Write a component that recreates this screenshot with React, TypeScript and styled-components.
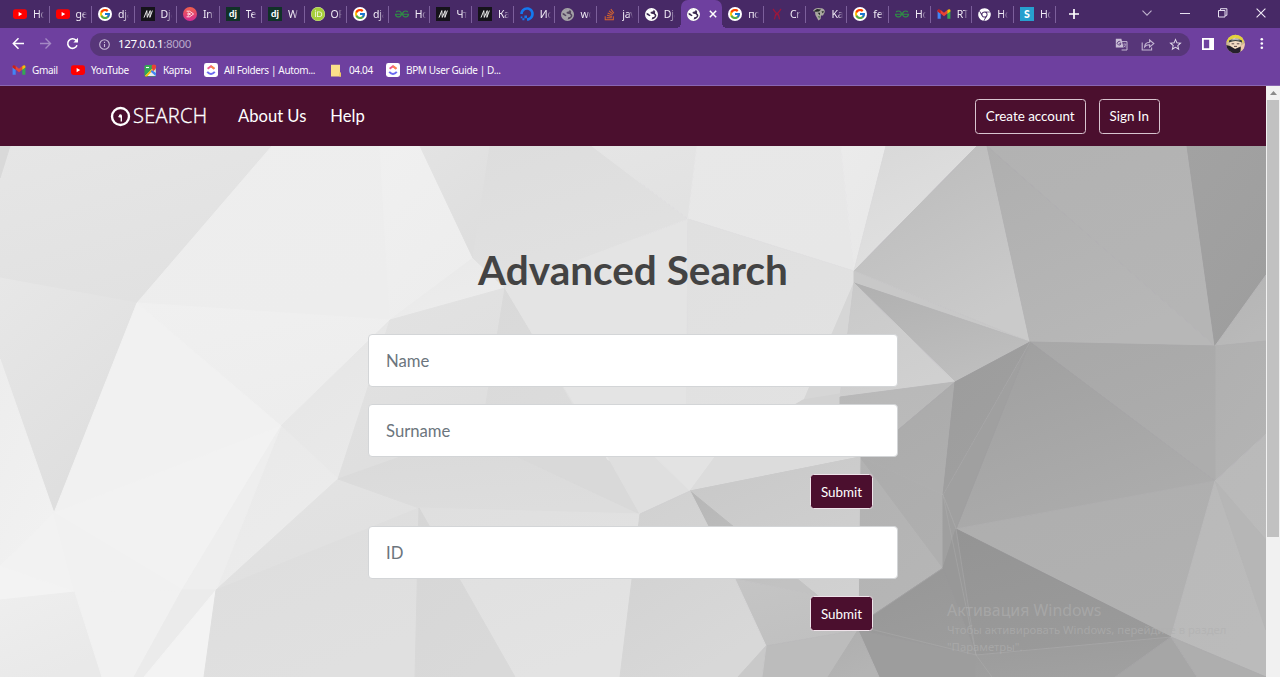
import React from 'react';
import styled, { createGlobalStyle, css } from 'styled-components';
import { FcGoogle } from 'react-icons/fc';
import { FaChrome, FaDigitalOcean, FaOrcid, FaStackOverflow } from 'react-icons/fa';
import { SiGeeksforgeeks } from 'react-icons/si';
import { MdGTranslate, MdStarBorder } from 'react-icons/md';

const uiFont = `'Noto Sans', 'Open Sans', sans-serif`;
const wine = '#4b0f2e';

const GlobalStyle = createGlobalStyle`
  * { box-sizing: border-box; }
  html, body { margin: 0; padding: 0; overflow: hidden; }
  body { font-family: Lato, sans-serif; }
  svg { display: block; flex: none; }
`;

const Window = styled.div`
  width: 1280px;
  height: 677px;
  display: flex;
  flex-direction: column;
  overflow: hidden;
  background: #6e409f;
`;

/* ---------- browser chrome ---------- */

const TabStrip = styled.div`
  height: 28px;
  flex: none;
  display: flex;
  padding-left: 7px;
  background: #472966;
`;

const Tab = styled.div<{ $active?: boolean; $wide?: boolean; $plain?: boolean }>`
  position: relative;
  width: ${p => (p.$wide ? 42.5 : 41.7)}px;
  height: 28px;
  flex: none;
  display: flex;
  align-items: center;
  gap: 6px;
  padding-left: 6px;
  ${p =>
    !p.$plain &&
    css`
      &::after {
        content: '';
        position: absolute;
        right: 0;
        top: 6px;
        width: 1px;
        height: 17px;
        background: #7c5f9b;
      }
    `}
  ${p =>
    p.$active &&
    css`
      background: #6e409f;
      border-radius: 7px 7px 0 0;
      gap: 9px;
      &::before {
        content: '';
        position: absolute;
        left: -5px;
        right: -5px;
        bottom: 0;
        height: 5px;
        background:
          radial-gradient(circle at 0 0, transparent 5px, #6e409f 5px) left / 5px 5px no-repeat,
          radial-gradient(circle at 100% 0, transparent 5px, #6e409f 5px) right / 5px 5px no-repeat;
      }
    `}
`;

const TabTitle = styled.span`
  width: 11px;
  overflow: hidden;
  white-space: nowrap;
  font: 10.5px/16px ${uiFont};
  letter-spacing: -0.2px;
  color: #f1ecf6;
  mask-image: linear-gradient(to right, #000 55%, transparent 100%);
`;

const WindowButtons = styled.div`
  margin-left: auto;
  display: flex;
  align-items: center;
  height: 25px;
  gap: 28px;
  padding-right: 14px;
`;

const NewTab = styled.div`
  padding-left: 13px;
  height: 28px;
  display: flex;
  align-items: center;
`;

const Toolbar = styled.div`
  height: 31px;
  flex: none;
  display: flex;
  align-items: center;
  padding: 0 12px 0 12px;
`;

const NavIcons = styled.div`
  width: 78px;
  display: flex;
  gap: 14px;
  align-items: center;
`;

const AddressBar = styled.div`
  width: 1100px;
  height: 23px;
  margin-top: 1px;
  border-radius: 12px;
  background: #573679;
  display: flex;
  align-items: center;
  padding: 0 7px 0 9px;
`;

const Url = styled.span`
  margin-left: 8px;
  font: 11.6px/16px ${uiFont};
  letter-spacing: -0.42px;
  color: #fff;
  span { color: #b9a8cb; }
`;

const BarActions = styled.div`
  margin-left: auto;
  display: flex;
  align-items: center;
  gap: 13px;
  color: #c3b5d2;
`;

const RightTools = styled.div`
  display: flex;
  align-items: center;
  gap: 12px;
  margin-left: 12px;
`;

const Bookmarks = styled.div`
  height: 27px;
  flex: none;
  display: flex;
  align-items: center;
  padding: 0 0 4px 12px;
  border-bottom: 1px solid #8a66b2;
`;

const Bookmark = styled.div<{ $w: number }>`
  width: ${p => p.$w}px;
  display: flex;
  align-items: center;
  gap: 6px;
  font: 10px/14px ${uiFont};
  letter-spacing: -0.36px;
  color: #fbf8fd;
  white-space: nowrap;
`;

/* ---------- web page ---------- */

const Viewport = styled.div`
  flex: 1;
  min-height: 0;
  display: flex;
`;

const Page = styled.div`
  width: 1266px;
  display: flex;
  flex-direction: column;
`;

const Navbar = styled.nav`
  height: 60px;
  flex: none;
  display: flex;
  align-items: center;
  padding: 0 106px 0 110px;
  background: ${wine};
  color: #fff;
`;

const Brand = styled.div`
  width: 128px;
  display: flex;
  align-items: center;
  gap: 2px;
  font: 20px/24px 'Open Sans', sans-serif;
  font-weight: 300;
  letter-spacing: 0.3px;
  -webkit-text-stroke: 0.35px #fff;
`;

const NavLink = styled.a`
  margin-right: 24px;
  font-size: 16.6px;
  line-height: 24px;
`;

const NavButtons = styled.div`
  margin-left: auto;
  display: flex;
  gap: 13px;
`;

const NavButton = styled.button`
  height: 35px;
  padding: 0 10px;
  border: 1px solid #d8c4cf;
  border-radius: 3.5px;
  background: transparent;
  color: #fff;
  font: 13.4px/20px Lato, sans-serif;
  white-space: nowrap;
`;

const Hero = styled.main`
  position: relative;
  flex: 1;
  min-height: 0;
  display: flex;
  flex-direction: column;
  align-items: center;
  overflow: hidden;
`;

const Backdrop = styled.svg`
  position: absolute;
  inset: 0;
`;

const Title = styled.h1`
  position: relative;
  margin: 100px 0 40px;
  font: 700 40.5px/48px Lato, sans-serif;
  color: #434343;
  white-space: nowrap;
`;

const SearchForm = styled.form`
  position: relative;
  width: 530px;
  display: flex;
  flex-direction: column;
  gap: 17px;
`;

const Field = styled.input`
  width: 530px;
  height: 53px;
  padding: 0 17px;
  border: 1px solid #d3d5d7;
  border-radius: 4px;
  background: #fff;
  font: 16.7px/26px Lato, sans-serif;
  &::placeholder { color: #6c757d; opacity: 1; }
`;

const Submit = styled.button`
  align-self: flex-end;
  width: 63px;
  height: 35px;
  margin-right: 25px;
  padding: 0;
  border: 1px solid #efe3ea;
  border-radius: 3.5px;
  background: ${wine};
  color: #fff;
  font: 13.4px/20px Lato, sans-serif;
`;

const Watermark = styled.aside`
  position: absolute;
  left: 947px;
  top: 454px;
  color: rgba(176, 176, 176, 0.62);
  white-space: nowrap;
  font: 11.3px/17px ${uiFont};
  h2 {
    margin: 0;
    font: 15.9px/21px ${uiFont};
  }
`;

const Scrollbar = styled.div`
  width: 14px;
  background: #f1f1f1;
  display: flex;
  flex-direction: column;
  align-items: center;
`;

const ScrollArrow = styled.div`
  height: 14px;
  display: flex;
  align-items: center;
`;

const ScrollThumb = styled.div`
  width: 12px;
  height: 437px;
  background: #c1c1c1;
`;

/* ---------- icons ---------- */

const YouTube = () => (
  <svg width="14" height="14" viewBox="0 0 14 14">
    <rect x="0" y="2.2" width="14" height="9.8" rx="2.4" fill="#f00" />
    <path d="M5.6 5v4.2L9.2 7.1z" fill="#fff" />
  </svg>
);

const GoogleDisc = styled.span`
  width: 14px;
  height: 14px;
  flex: none;
  border-radius: 50%;
  background: #fff;
  display: grid;
  place-items: center;
`;
const Google = () => (
  <GoogleDisc>
    <FcGoogle size={12} />
  </GoogleDisc>
);

const Medium = () => (
  <svg width="14" height="14" viewBox="0 0 14 14">
    <rect width="14" height="14" fill="#15131a" />
    <path d="M3 10.6L5.8 3.6L6.3 10.4L9.2 3.6L8.9 10.4M8.9 10.4L11.4 3.6" fill="none" stroke="#f3f3f3" strokeWidth=".95" />
  </svg>
);

const Pink = () => (
  <svg width="14" height="14" viewBox="0 0 14 14">
    <defs>
      <linearGradient id="pk" x1="0" y1="0" x2="0" y2="1">
        <stop offset="0" stopColor="#f2604a" />
        <stop offset="1" stopColor="#d42a92" />
      </linearGradient>
    </defs>
    <circle cx="7" cy="7" r="7" fill="url(#pk)" />
    <path d="M3.6 4.2h3l4 2.8-4 2.8h-3M5 5.8l2.6 1.2L5 8.3z" fill="none" stroke="#ffd9e4" strokeWidth="1" />
  </svg>
);

const Django = () => (
  <svg width="14" height="14" viewBox="0 0 14 14">
    <rect width="14" height="14" fill="#113228" />
    <text x="7" y="10" textAnchor="middle" fontFamily="Lato, sans-serif" fontWeight="900" fontSize="9.5" fill="#fff">dj</text>
  </svg>
);

const OrcidDisc = styled.span`
  width: 14px;
  height: 14px;
  flex: none;
  border-radius: 50%;
  background: #f3f8e8;
`;
const Orcid = () => (
  <OrcidDisc>
    <FaOrcid size={14} color="#a6ce39" />
  </OrcidDisc>
);

const WorldDisc = styled.span<{ $dim?: boolean }>`
  width: 13px;
  height: 13px;
  flex: none;
  border-radius: 50%;
  background: ${p => (p.$dim ? '#54465f' : '#3b2a50')};
  color: ${p => (p.$dim ? '#a5a2a8' : '#fff')};
`;
const World = ({ dim }: { dim?: boolean }) => (
  <WorldDisc $dim={dim}>
    <svg width="13" height="13" viewBox="0 0 14 14">
      <circle cx="7" cy="7" r="6.2" fill="none" stroke="currentColor" strokeWidth="1.6" />
      <path d="M1.4 5C2.4 2 6 .6 9.6 1.4L8.8 3.6L6 4.4L6.2 6L9.6 6.8L10.8 8.6L9.4 9.8L7.8 10L7 13C3.4 12.8 1 9.8 1 6.8L5 8.8L6 8L3.6 6z" fill="currentColor" />
      <path d="M10.6 2.8L13.2 5.4L13 8L11 5.8z" fill="currentColor" />
    </svg>
  </WorldDisc>
);

const Scissors = () => (
  <svg width="14" height="14" viewBox="0 0 14 14" fill="none" stroke="#9b173c" strokeWidth="1.3">
    <path d="M3 2L7 7.4M11 2L7 7.4M6.1 5.6L4.4 12.4M7.9 5.6L9.6 12.4M7 5.6v3" />
  </svg>
);

const Sketch = () => (
  <svg width="14" height="14" viewBox="0 0 14 14">
    <path d="M1 4C2 1.5 5 .6 8 1.2C11 .8 13.6 3 12.6 5.6L11 8.4L9 8.6L8.6 12L6.4 13.4L4.8 10.6L3.4 8L3 5z" fill="#a9a79f" />
    <path d="M1.4 4.4L5 2L9 2.6L7 4.4L4 4.8zM5.6 5.8h2.4v2.4zM9.4 4.6l2.4-.6-.8 2.6z" fill="#262b28" />
    <path d="M6 9l2 .6-.8 2z" fill="#456b42" />
  </svg>
);

const Gmail = () => (
  <svg width="14" height="14" viewBox="0 0 14 14">
    <path d="M.6 3.4V11.8H3.7V6z" fill="#4285f4" />
    <path d="M13.4 3.4V11.8H10.3V6z" fill="#34a853" />
    <path d="M.6 3.2L3.7 3L7 5.8L10.3 3V6.6L7 9.2L3.7 6.6L.6 4.6z" fill="#ea4335" />
    <path d="M10.3 3Q13.2 1.4 13.4 3.6L13.4 4.6L10.3 6.8z" fill="#fbbc04" />
    <path d="M3.7 3Q.8 1.4 .6 3.6L.6 4.6L3.7 6.8z" fill="#c5221f" />
  </svg>
);

const SBlock = () => (
  <svg width="14" height="14" viewBox="0 0 14 14">
    <rect width="14" height="14" fill="#279fce" />
    <text x="7" y="10.8" textAnchor="middle" fontFamily="Lato, sans-serif" fontWeight="900" fontSize="10.5" fill="#fff">S</text>
  </svg>
);

const Maps = () => (
  <svg width="13" height="13" viewBox="0 0 13 13">
    <rect x=".5" y="1" width="11.5" height="11.5" rx="1.5" fill="#34a853" />
    <path d="M1 12L11.5 1.5L12 12z" fill="#e8eaed" />
    <path d="M.8 12.2L8 4.8L9.2 6L3 12.5z" fill="#fbbc04" />
    <path d="M6.5 7.5L11.8 12.3L12 9L8 6z" fill="#4285f4" />
    <path d="M9.7 7.6C9 5.6 7.6 5 7.6 2.7a2.3 2.3 0 0 1 4.6 0C12.2 5 10.4 5.6 9.7 7.6z" fill="#ea4335" />
    <path d="M2 3.5h3" stroke="#fff" strokeWidth="1.1" />
  </svg>
);

const ClickUp = () => (
  <svg width="14" height="14" viewBox="0 0 14 14">
    <rect width="14" height="14" rx="2.4" fill="#fff" />
    <path d="M3.6 5.8L7 3.2L10.4 5.8" fill="none" stroke="#f0578c" strokeWidth="1.9" />
    <path d="M7 3.2L10.4 5.8" fill="none" stroke="#f9884a" strokeWidth="1.9" />
    <path d="M3.2 8.9Q7 13 10.8 8.9" fill="none" stroke="#6c6bf0" strokeWidth="2" />
  </svg>
);

const Folder = () => (
  <svg width="13" height="13" viewBox="0 0 13 13">
    <path d="M1 .8H10V8.6L11 9.4V12.4H1z" fill="#fbe08a" />
    <path d="M9.3 8.6H11V12.4H9.3z" fill="#efc965" />
  </svg>
);

const Avatar = () => (
  <svg width="19" height="20" viewBox="0 0 19 20">
    <defs>
      <clipPath id="av"><circle cx="9.5" cy="10" r="9.3" /></clipPath>
    </defs>
    <g clipPath="url(#av)">
      <rect width="19" height="20" fill="#cdb992" />
      <path d="M0 9L3 2L9 0L16 2L18 9L12 4L5 5z" fill="#e3d13c" />
      <path d="M3 8L9 3.6L15 8L14.5 12L9.5 15L4.5 12z" fill="#f4dcc4" />
      <path d="M3 6.6Q9.5 3 16 6.6V8.6Q9.5 5.6 3 8.6z" fill="#3b4140" />
      <path d="M5.5 5.6Q9.5 4 13.5 5.6V6.6Q9.5 5.2 5.5 6.6z" fill="#aeb3b0" />
      <path d="M0 11L4 12L9 15L15 12.4L14 20H0z" fill="#26202c" />
      <path d="M14.6 12L19 9V18L15.4 17z" fill="#efc9ac" />
      <path d="M5.6 9.8h2.6M10.8 9.8h2.6M8 12.4h3" stroke="#4b3a3c" strokeWidth=".9" />
    </g>
  </svg>
);

type TabInfo = { icon: React.ReactNode; title: string };

const gfg = <SiGeeksforgeeks size={14} color="#2f8d46" />;

const tabs: TabInfo[] = [
  { icon: <YouTube />, title: 'Но' },
  { icon: <YouTube />, title: 'ge' },
  { icon: <Google />, title: 'dja' },
  { icon: <Medium />, title: 'Dja' },
  { icon: <Pink />, title: 'Int' },
  { icon: <Django />, title: 'Te' },
  { icon: <Django />, title: 'W' },
  { icon: <Orcid />, title: 'OR' },
  { icon: <Google />, title: 'dja' },
  { icon: gfg, title: 'Ho' },
  { icon: <Medium />, title: 'Что' },
  { icon: <Medium />, title: 'Как' },
  { icon: <FaDigitalOcean size={14} color="#1479f0" />, title: 'Ис' },
  { icon: <World dim />, title: 'wo' },
  { icon: <FaStackOverflow size={13} color="#d9652c" />, title: 'jav' },
  { icon: <World />, title: 'Dja' },
  { icon: <World />, title: '' },
  { icon: <Google />, title: 'по' },
  { icon: <Scissors />, title: 'Cr' },
  { icon: <Sketch />, title: 'Ka' },
  { icon: <Google />, title: 'fet' },
  { icon: gfg, title: 'Ho' },
  { icon: <Gmail />, title: 'RT' },
  { icon: <FaChrome size={13} color="#fff" />, title: 'Но' },
  { icon: <SBlock />, title: 'Но' },
];
const activeTab = 16;

/* ---------- faceted backdrop ---------- */

type Facet = [points: string, from: string, to?: string];

const facets: Facet[] = [
  ['0,146 640,146 640,677 0,677', '#e0e0e0'],
  ['0,146 272,146 137,303 0,278', '#e6e6e6', '#e1e1e1'],
  ['0,146 10,146 0,178', '#d9d9d9'],
  ['0,278 137,303 54,513 0,359', '#e7e7e7', '#dedede'],
  ['0,359 54,513 0,566', '#ededed', '#f1f1f1'],
  ['272,146 380,146 390,320 137,303', '#eeeeee', '#ededed'],
  ['380,146 420,146 473,258 390,320', '#f0f0f0', '#ededed'],
  ['473,258 505,288 390,320', '#e9e9e9', '#ececec'],
  ['137,303 390,320 368,380 281,426', '#f0f0f0', '#ededed'],
  ['137,303 281,426 54,513', '#f1f1f1'],
  ['54,513 281,426 182,590 75,592 0,566', '#f2f2f2'],
  ['54,513 182,590 75,592', '#f1f1f1'],
  ['281,426 390,320 338,479', '#e5e5e5', '#e9e9e9'],
  ['281,426 338,479 216,590', '#e9e9e9', '#ececec'],
  ['281,426 216,590 182,590', '#eeeeee'],
  ['0,566 75,592 0,600', '#f3f3f3'],
  ['0,600 75,592 102,677 0,677', '#eeeeee', '#e9e9e9'],
  ['75,592 182,590 144,677 102,677', '#f1f1f1'],
  ['182,590 216,590 144,677 134,677', '#ebebeb'],
  ['216,590 204,677 144,677', '#f3f3f3'],
  ['338,479 419,508 240,580 216,590', '#e3e3e3', '#e0e0e0'],
  ['216,590 419,508 416,677 204,677', '#dddddd', '#e0e0e0'],
  ['390,320 505,288 487,403 400,457 338,479', '#e3e3e3', '#dedede'],
  ['505,288 475,470 610,470', '#d9d9d9', '#dcdcdc'],
  ['338,479 400,457 518,457 640,514 419,508', '#dadada', '#dddddd'],
  ['518,457 608,457 640,514', '#d9d9d9'],
  ['419,508 640,514 620,677 515,677', '#dfdfdf', '#e3e3e3'],
  ['419,508 515,677 415,677', '#d6d6d6', '#d9d9d9'],
  ['420,146 490,146 473,258', '#e3e3e3', '#dedede'],
  ['490,146 592,146 688,219 505,288 473,258', '#dddddd', '#e1e1e1'],
  ['592,146 697,146 688,219', '#e5e5e5', '#e2e2e2'],
  ['697,146 841,146 854,271 688,219', '#e8e8e8', '#e7e7e7'],
  ['841,146 886,146 854,271', '#ebebeb', '#e8e8e8'],
  ['886,146 977,146 854,271', '#d8d8d8', '#e1e1e1'],
  ['505,288 688,219 686,460 608,460', '#e4e4e4'],
  ['688,219 854,271 854,283 790,457 686,460', '#e0e0e0', '#e2e2e2'],
  ['608,457 790,457 690,491 640,514', '#dfdfdf'],
  ['655,457 715,457 690,491', '#e3e3e3'],
  ['854,283 840,397 790,457 780,457 832,334', '#d6d6d6'],
  ['715,457 860,457 690,491', '#dcdcdc'],
  ['690,491 860,457 858,595 735,579', '#cfcfcf'],
  ['977,146 987,146 1030,342 854,271', '#bababa', '#cacaca'],
  ['854,271 1030,342 854,283', '#c8c8c8'],
  ['854,283 1030,342 955,382', '#b0b0b0', '#bebebe'],
  ['854,283 955,382 840,397', '#c9c9c9', '#d0d0d0'],
  ['803,400 840,394 840,410 786,410', '#d2d2d2'],
  ['840,397 955,382 898,430 860,457 840,440', '#b8b8b8', '#bbbbbb'],
  ['860,457 898,430 955,382 943,495', '#aaaaaa', '#aeaeae'],
  ['987,146 1187,146 1215,346', '#b2b2b2', '#b5b5b5'],
  ['987,146 1215,346 1030,342', '#afafaf', '#b7b7b7'],
  ['1187,146 1266,146 1266,275 1215,346', '#a2a2a2', '#9e9e9e'],
  ['1215,346 1266,275 1266,341', '#b4b4b4', '#b9b9b9'],
  ['1215,346 1266,341 1266,434 1215,481', '#b0b0b0', '#b3b3b3'],
  ['1030,342 1215,346 1215,481', '#a8a8a8', '#adadad'],
  ['1030,342 1215,481 956,529', '#9f9f9f', '#acacac'],
  ['1030,342 955,382 943,495', '#9c9c9c', '#a0a0a0'],
  ['1030,342 943,495 956,529', '#a0a0a0'],
  ['956,529 1215,481 1171,637', '#aeaeae', '#b1b1b1'],
  ['1215,481 1266,434 1266,677 1171,637', '#b9b9b9', '#bbbbbb'],
  ['1215,481 1266,540 1266,630', '#b6b6b6'],
  ['860,457 943,495 956,529 943,568 873,615 858,630', '#b2b2b2', '#b6b6b6'],
  ['860,457 943,495 943,568', '#acacac', '#afafaf'],
  ['943,495 956,529 943,568', '#9f9f9f'],
  ['956,529 1171,637 976,655', '#949494', '#9a9a9a'],
  ['943,568 956,529 976,655', '#989898'],
  ['943,568 873,615 858,630 976,655', '#969696', '#9c9c9c'],
  ['858,630 976,655 976,677 879,677', '#9d9d9d'],
  ['976,655 1171,637 1115,677 976,677', '#9b9b9b', '#a0a0a0'],
  ['1171,637 1197,677 1115,677', '#a6a6a6'],
  ['1171,637 1266,677 1197,677', '#aeaeae'],
  ['690,491 860,457 858,630 817,595', '#c8c8c8', '#d1d1d1'],
  ['690,491 735,579 817,595', '#b6b6b6', '#c2c2c2'],
  ['735,579 817,595 858,630 766,646', '#c5c5c5', '#c0c0c0'],
  ['766,646 858,630 830,677 762,677', '#bcbcbc'],
  ['858,630 879,677 828,677', '#aeaeae', '#b4b4b4'],
  ['640,514 690,491 735,579 766,646 740,677 620,677', '#d0d0d0', '#d8d8d8'],
  ['766,646 762,677 738,677', '#c9c9c9'],
];

const seams = [
  '1030,342 943,495 976,655',
  '943,495 956,529 976,655 992,677',
  '858,626 976,655 1171,637',
  '943,568 873,615',
];

const Facets = () => (
  <Backdrop width="1266" height="531" viewBox="0 146 1266 531" aria-hidden="true">
    <defs>
      {facets.map(([, from, to], i) =>
        to ? (
          <linearGradient key={i} id={`f${i}`} x1="0" y1="0" x2=".5" y2="1">
            <stop offset="0" stopColor={from} />
            <stop offset="1" stopColor={to} />
          </linearGradient>
        ) : null,
      )}
    </defs>
    {facets.map(([points, from, to], i) => {
      const paint = to ? `url(#f${i})` : from;
      return <polygon key={i} points={points} fill={paint} stroke={paint} strokeWidth="1" strokeLinejoin="round" />;
    })}
    {seams.map(points => (
      <polyline key={points} points={points} fill="none" stroke="#b4b4b4" strokeOpacity=".45" strokeWidth=".8" />
    ))}
  </Backdrop>
);

export default function App() {
  return (
    <Window>
      <GlobalStyle />
      <TabStrip>
        {tabs.map((t, i) => (
          <Tab key={i} $wide={i < 8} $active={i === activeTab} $plain={i === activeTab || i === activeTab - 1 || i === activeTab + 0}>
            {t.icon}
            {i === activeTab ? (
              <svg width="8" height="8" viewBox="0 0 8 8" stroke="#fff" strokeWidth="1.5">
                <path d="M.8.8l6.4 6.4M7.2.8L.8 7.2" />
              </svg>
            ) : (
              <TabTitle>{t.title}</TabTitle>
            )}
          </Tab>
        ))}
        <NewTab>
          <svg width="10" height="10" viewBox="0 0 10 10" stroke="#fff" strokeWidth="1.7">
            <path d="M5 0v10M0 5h10" />
          </svg>
        </NewTab>
        <WindowButtons>
          <svg width="10" height="10" viewBox="0 0 10 10" fill="none" stroke="#bfb2cc" strokeWidth="1.1">
            <path d="M.5 2.6L5 7.2L9.5 2.6" />
          </svg>
          <svg width="10" height="10" viewBox="0 0 10 10" stroke="#e6dff0" strokeWidth="1">
            <path d="M0 5.5h10" />
          </svg>
          <svg width="10" height="10" viewBox="0 0 10 10" fill="none" stroke="#e6dff0" strokeWidth="1">
            <path d="M.5 2.5h6.5v6.5H.5zM2.5 2.4V.7h6.4v6.6H7.2" />
          </svg>
          <svg width="10" height="10" viewBox="0 0 10 10" stroke="#f1ecf6" strokeWidth="1.1">
            <path d="M.6.6l8.8 8.8M9.4.6L.6 9.4" />
          </svg>
        </WindowButtons>
      </TabStrip>

      <Toolbar>
        <NavIcons>
          <svg width="13" height="13" viewBox="0 0 13 13" fill="none" stroke="#fff" strokeWidth="1.5">
            <path d="M12 6.5H1.5M6.5 1.3L1.3 6.5L6.5 11.7" />
          </svg>
          <svg width="13" height="13" viewBox="0 0 13 13" fill="none" stroke="#a488c4" strokeWidth="1.4">
            <path d="M1 6.5H11.5M6.5 1.5L11.5 6.5L6.5 11.5" />
          </svg>
          <svg width="13" height="13" viewBox="0 0 13 13" fill="none" stroke="#fff" strokeWidth="1.6">
            <path d="M11 8.3A4.8 4.8 0 1 1 9.9 3.1L11.4 4.6" />
            <path d="M12 .8V5.4H7.4z" fill="#fff" stroke="none" />
          </svg>
        </NavIcons>
        <AddressBar>
          <svg width="11" height="11" viewBox="0 0 11 11" fill="none" stroke="#c9bdd8" strokeWidth="1.1">
            <circle cx="5.5" cy="5.5" r="4.8" />
            <path d="M5.5 5v3M5.5 2.8v1.2" />
          </svg>
          <Url>
            127.0.0.1<span>:8000</span>
          </Url>
          <BarActions>
            <svg width="13" height="13" viewBox="0 0 13 13" fill="none">
              <path d="M6 3.6H12V12H6.6" stroke="currentColor" strokeWidth="1" />
              <path d="M.8 .8H6.4L8.6 9.6H.8z" fill="#c9bdd6" />
              <path d="M5.6 4.2A1.8 1.8 0 1 0 5.9 5.6H4.4" stroke="#573679" strokeWidth=".9" />
              <path d="M8.2 6.2h3M9.8 5.4v.8M10.8 6.4Q10.2 8.4 8.8 9.2M8.8 7.4l2 2" stroke="currentColor" strokeWidth=".7" />
            </svg>
            <svg width="14" height="13" viewBox="0 0 14 13" fill="none" stroke="currentColor" strokeWidth="1.1">
              <path d="M1.2 4.6V12H10.6V9.4" />
              <path d="M3.6 8.8C4 5.6 6 4.4 8.6 4.3V2L12.8 5.6L8.6 9V6.8C6.4 6.8 4.8 7.2 3.6 8.8z" />
            </svg>
            <MdStarBorder size={15} color="#e2daeb" />
          </BarActions>
        </AddressBar>
        <RightTools>
          <svg width="12" height="12" viewBox="0 0 12 12">
            <path d="M0 0H12V12H0zM1.8 1.8V10.2H7.2V1.8z" fill="#fff" fillRule="evenodd" />
          </svg>
          <Avatar />
          <svg width="10" height="13" viewBox="0 0 10 13" fill="#fff">
            <circle cx="4.8" cy="2.3" r="1.3" />
            <circle cx="4.8" cy="6.5" r="1.3" />
            <circle cx="4.8" cy="10.7" r="1.3" />
          </svg>
        </RightTools>
      </Toolbar>

      <Bookmarks>
        <Bookmark $w={59}><Gmail />Gmail</Bookmark>
        <Bookmark $w={73}><YouTube />YouTube</Bookmark>
        <Bookmark $w={60}><Maps />Карты</Bookmark>
        <Bookmark $w={126}><ClickUp />All Folders | Autom...</Bookmark>
        <Bookmark $w={56}><Folder />04.04</Bookmark>
        <Bookmark $w={130}><ClickUp />BPM User Guide | D...</Bookmark>
      </Bookmarks>

      <Viewport>
        <Page>
          <Navbar>
            <Brand>
              <svg width="21" height="21" viewBox="0 0 21 21" fill="none" stroke="#fff">
                <circle cx="10.5" cy="10.5" r="8.5" strokeWidth="2.4" />
                <path d="M8.4 10.6H11.3V15.6" strokeWidth="1.4" />
                <circle cx="10.4" cy="9.9" r="1.6" fill="#fff" stroke="none" />
              </svg>
              SEARCH
            </Brand>
            <NavLink>About Us</NavLink>
            <NavLink>Help</NavLink>
            <NavButtons>
              <NavButton>Create account</NavButton>
              <NavButton>Sign In</NavButton>
            </NavButtons>
          </Navbar>
          <Hero>
            <Facets />
            <Title>Advanced Search</Title>
            <SearchForm>
              <Field placeholder="Name" />
              <Field placeholder="Surname" />
              <Submit type="button">Submit</Submit>
              <Field placeholder="ID" />
              <Submit type="button">Submit</Submit>
            </SearchForm>
            <Watermark>
              <h2>Активация Windows</h2>
              Чтобы активировать Windows, перейдите в раздел
              <br />
              "Параметры".
            </Watermark>
          </Hero>
        </Page>
        <Scrollbar>
          <ScrollArrow>
            <svg width="7" height="4" viewBox="0 0 7 4" fill="#8b8b8b">
              <path d="M0 4L3.5 0L7 4z" />
            </svg>
          </ScrollArrow>
          <ScrollThumb />
        </Scrollbar>
      </Viewport>
    </Window>
  );
}
